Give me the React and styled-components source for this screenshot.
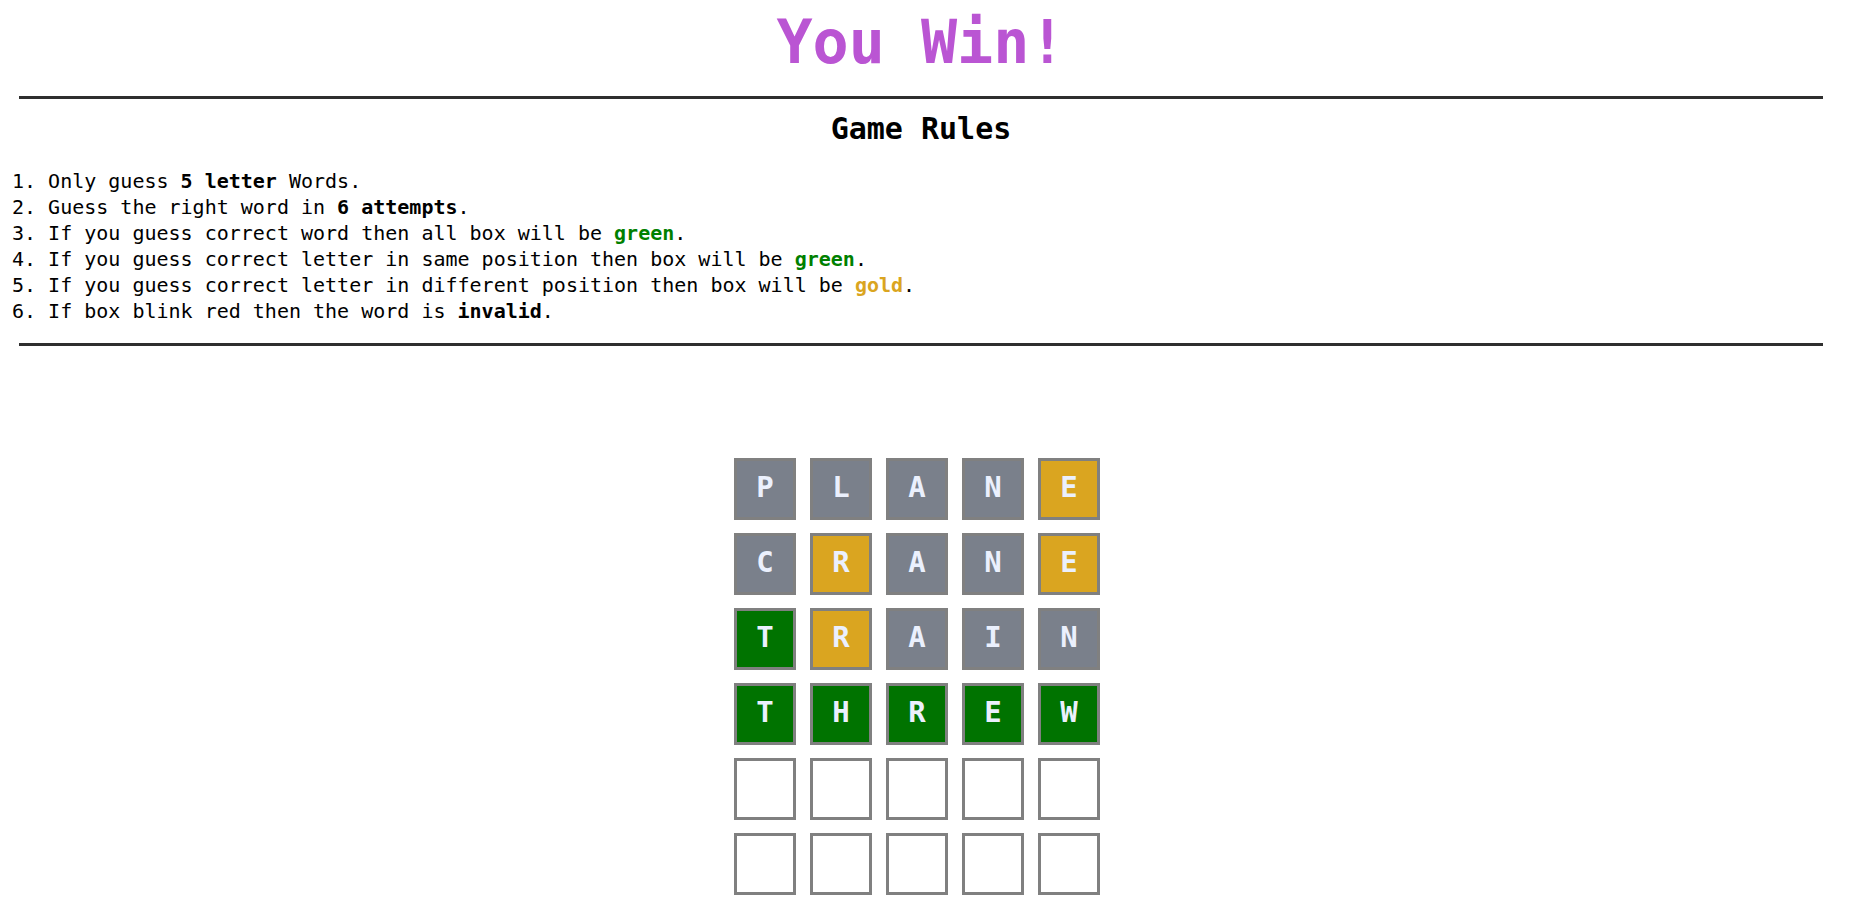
import React from "react";
import styled, { createGlobalStyle } from "styled-components";

const GlobalStyle = createGlobalStyle`
  html, body {
    margin: 0;
    padding: 0;
    background: #ffffff;
  }
  body {
    font-family: "DejaVu Sans Mono", "Liberation Mono", monospace;
    color: #000;
  }
`;

const Page = styled.main`
  box-sizing: border-box;
  padding: 12px 15px 30px 0;
  display: flex;
  flex-direction: column;
`;

const Title = styled.h1`
  margin: 0;
  text-align: center;
  font-size: 60px;
  line-height: 60px;
  font-weight: 700;
  color: #ba55d3;
`;

const Divider = styled.hr`
  border: none;
  height: 3px;
  background: #2f2f2f;
  margin: ${(p) => p.$top}px 19px 0;
`;

const RulesTitle = styled.h2`
  margin: 12px 0 0;
  text-align: center;
  font-size: 30px;
  line-height: 36px;
  font-weight: 700;
`;

const RulesList = styled.div`
  margin: 21px 0 0;
  padding-left: 12px;
  display: flex;
  flex-direction: column;
`;

const Rule = styled.div`
  font-size: 20px;
  line-height: 26px;
  white-space: pre;
`;

const Strong = styled.b`
  font-weight: 700;
  color: ${(p) => p.$color || "inherit"};
`;

const BoardWrap = styled.section`
  display: flex;
  justify-content: center;
  margin-top: 112px;
`;

const Board = styled.div`
  display: flex;
  flex-direction: column;
  gap: 13px;
  margin-right: 8px;
`;

const Row = styled.div`
  display: flex;
  gap: 14px;
`;

const tileColors = {
  gray: "#7a808b",
  gold: "#daa520",
  green: "#007300",
  empty: "#ffffff",
};

const Tile = styled.div`
  box-sizing: border-box;
  width: 62px;
  height: 62px;
  border: 3px solid #808080;
  background: ${(p) => tileColors[p.$state]};
  color: #ebf0fd;
  display: flex;
  align-items: center;
  justify-content: center;
  font-size: 29px;
  font-weight: 700;
  padding-bottom: 4px;
`;

const rows = [
  [["P", "gray"], ["L", "gray"], ["A", "gray"], ["N", "gray"], ["E", "gold"]],
  [["C", "gray"], ["R", "gold"], ["A", "gray"], ["N", "gray"], ["E", "gold"]],
  [["T", "green"], ["R", "gold"], ["A", "gray"], ["I", "gray"], ["N", "gray"]],
  [["T", "green"], ["H", "green"], ["R", "green"], ["E", "green"], ["W", "green"]],
  [["", "empty"], ["", "empty"], ["", "empty"], ["", "empty"], ["", "empty"]],
  [["", "empty"], ["", "empty"], ["", "empty"], ["", "empty"], ["", "empty"]],
];

export default function App() {
  return (
    <>
      <GlobalStyle />
      <Page>
        <Title>You Win!</Title>
        <Divider $top={24} />
        <RulesTitle>Game Rules</RulesTitle>
        <RulesList>
          <Rule>
            1. Only guess <Strong>5 letter</Strong> Words.
          </Rule>
          <Rule>
            2. Guess the right word in <Strong>6 attempts</Strong>.
          </Rule>
          <Rule>
            3. If you guess correct word then all box will be{" "}
            <Strong $color="#008000">green</Strong>.
          </Rule>
          <Rule>
            4. If you guess correct letter in same position then box will be{" "}
            <Strong $color="#008000">green</Strong>.
          </Rule>
          <Rule>
            5. If you guess correct letter in different position then box will be{" "}
            <Strong $color="#daa520">gold</Strong>.
          </Rule>
          <Rule>
            6. If box blink red then the word is <Strong>invalid</Strong>.
          </Rule>
        </RulesList>
        <Divider $top={19} />
        <BoardWrap>
          <Board>
            {rows.map((row, i) => (
              <Row key={i}>
                {row.map(([letter, state], j) => (
                  <Tile key={j} $state={state}>
                    {letter}
                  </Tile>
                ))}
              </Row>
            ))}
          </Board>
        </BoardWrap>
      </Page>
    </>
  );
}
